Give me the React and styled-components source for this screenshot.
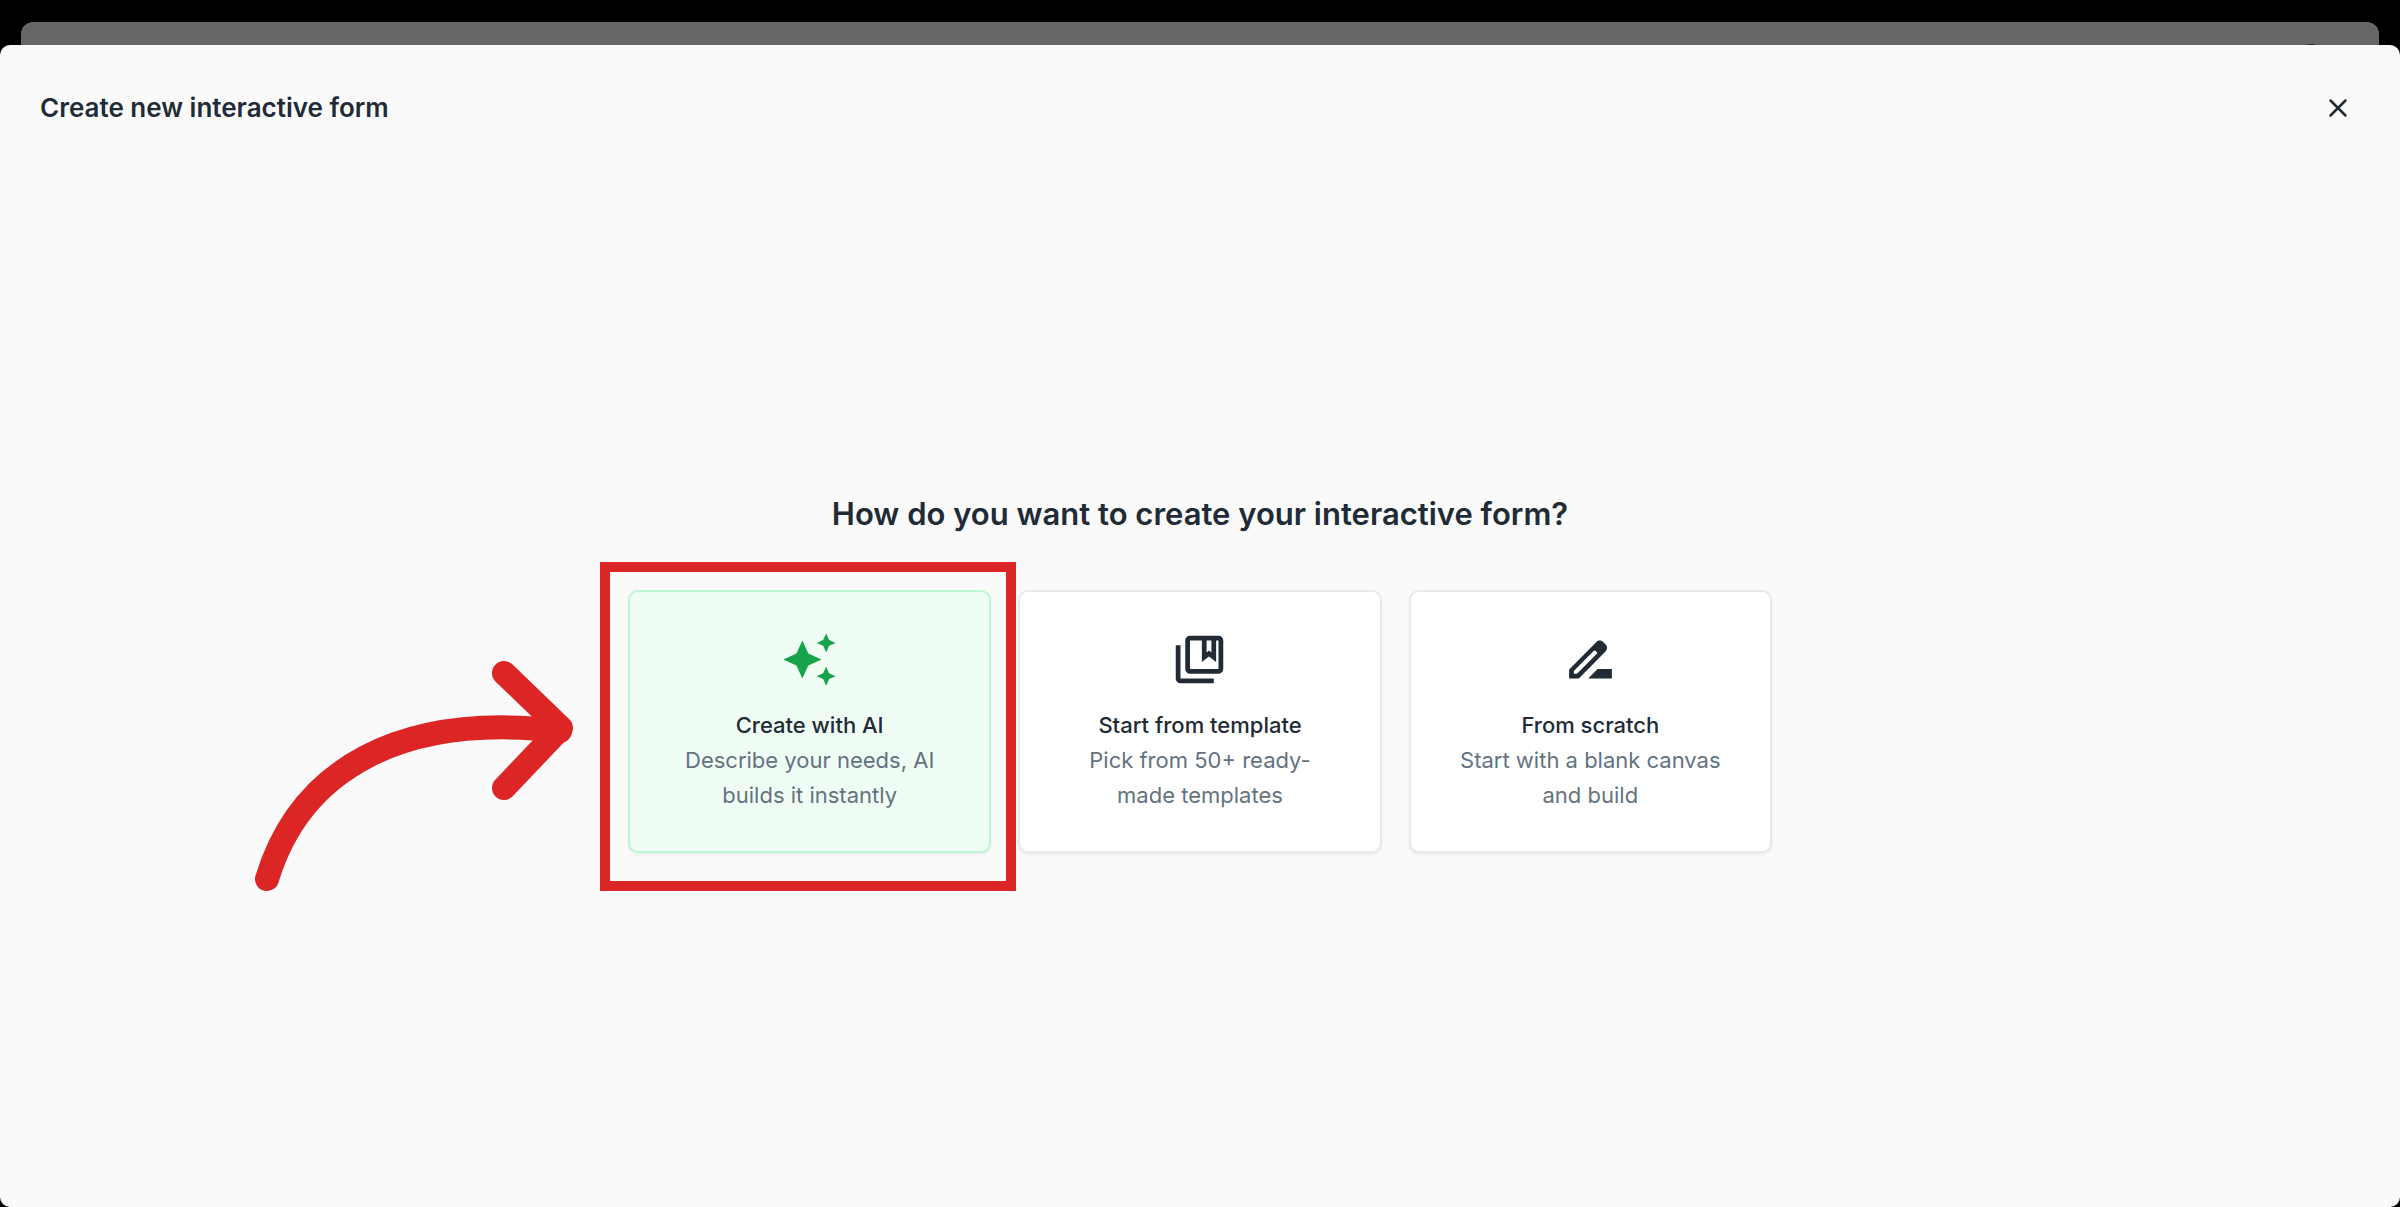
import React from "react";
import styled, { createGlobalStyle } from "styled-components";
import { MdAutoAwesome, MdOutlineCollectionsBookmark } from "react-icons/md";
import { X } from "lucide-react";

const GlobalStyle = createGlobalStyle`
  * {
    box-sizing: border-box;
  }
  body {
    margin: 0;
    background: #000;
    color: #212b36;
    font-family: Inter, "Liberation Sans", sans-serif;
  }
`;

const Page = styled.div`
  display: flex;
  flex-direction: column;
  min-height: 100vh;
`;

const PageBehind = styled.div`
  position: relative;
  height: 23px;
  margin: 22px 21px 0;
  background: #666;
  border-radius: 12px 12px 0 0;
  overflow: hidden;
`;

const AvatarEdge = styled.span`
  position: absolute;
  right: 56px;
  bottom: -23px;
  width: 24px;
  height: 24px;
  border-radius: 50%;
  background: #222;
`;

const Sheet = styled.section`
  display: flex;
  flex: 1;
  flex-direction: column;
  background: #fafafa;
  border-radius: 10px;
`;

const Header = styled.header`
  display: flex;
  align-items: center;
  justify-content: space-between;
  padding: 46px 44px 16px 40px;
`;

const Title = styled.h1`
  margin: 0;
  font-size: 26px;
  font-weight: 600;
  line-height: 34px;
`;

const CloseButton = styled.button`
  display: flex;
  align-items: center;
  justify-content: center;
  width: 36px;
  height: 34px;
  padding: 0;
  border: 0;
  background: none;
  color: inherit;
  cursor: pointer;
`;

const Body = styled.main`
  display: flex;
  flex: 1;
  flex-direction: column;
  align-items: center;
  justify-content: center;
  gap: 57px;
`;

const Question = styled.h2`
  margin: 0;
  font-size: 31px;
  font-weight: 600;
  line-height: 38px;
  text-align: center;
`;

const Options = styled.div`
  display: grid;
  grid-template-columns: repeat(3, 1fr);
  gap: 27px;
  width: 100%;
  max-width: 1144px;
`;

const OptionSlot = styled.div`
  position: relative;
  display: flex;
`;

const OptionCard = styled.button`
  display: flex;
  flex: 1;
  flex-direction: column;
  align-items: center;
  padding: 39px 40px 38px;
  border: 2px solid ${(props) => (props.$featured ? "#bbf7d0" : "#e5eaee")};
  border-radius: 10px;
  background: ${(props) => (props.$featured ? "#f0fdf4" : "#fff")};
  box-shadow: 0 2px 3px rgba(0, 0, 0, 0.06);
  color: #212b36;
  font: inherit;
  font-size: 22px;
  line-height: 35px;
  text-align: center;
  cursor: pointer;

  svg {
    width: 57px;
    height: 57px;
    margin-bottom: 20px;
    color: ${(props) => (props.$featured ? "#16a34a" : "inherit")};
  }
`;

const OptionName = styled.span`
  font-weight: 500;
`;

const OptionText = styled.span`
  max-width: 272px;
  color: #637381;
`;

const Highlight = styled.div`
  position: absolute;
  inset: -28px -25px -38px -28px;
  border: 10px solid #dc2626;
  pointer-events: none;
`;

const ArrowDrawing = styled.svg`
  position: absolute;
  top: 65px;
  right: 100%;
  width: 328px;
  height: 240px;
  margin-right: 50px;
  pointer-events: none;
`;

const PencilIcon = () => (
  <svg viewBox="0 0 24 24" fill="currentColor" aria-hidden="true">
    <path d="M15 16l-4 4h10v-4z" />
    <path
      fillRule="evenodd"
      d="M3 16.2L14.5 4.6c.8-.8 2-.8 2.8 0l1.1 1.1c.8.8.8 2 0 2.8L7.1 20H3zM5 16.8V18h1.3l8.3-8.3c.3-.3.3-.6 0-.9l-.4-.4c-.3-.3-.6-.3-.9 0z"
    />
  </svg>
);

const Arrow = () => (
  <ArrowDrawing viewBox="250 655 328 240" aria-hidden="true">
    <g
      fill="none"
      stroke="#dc2626"
      strokeWidth="24"
      strokeLinecap="round"
      strokeLinejoin="round"
    >
      <path d="M267 879C300 770 400 712 560 731" />
      <path d="M504 673L561 728L504 788" />
    </g>
  </ArrowDrawing>
);

const options = [
  {
    name: "Create with AI",
    text: "Describe your needs, AI builds it instantly",
    icon: <MdAutoAwesome />,
    featured: true,
  },
  {
    name: "Start from template",
    text: "Pick from 50+ ready-made templates",
    icon: <MdOutlineCollectionsBookmark />,
  },
  {
    name: "From scratch",
    text: "Start with a blank canvas and build",
    icon: <PencilIcon />,
  },
];

const App = () => {
  return (
    <Page>
      <GlobalStyle />
      <PageBehind>
        <AvatarEdge />
      </PageBehind>
      <Sheet>
        <Header>
          <Title>Create new interactive form</Title>
          <CloseButton type="button" aria-label="Close">
            <X size={30} strokeWidth={2} />
          </CloseButton>
        </Header>
        <Body>
          <Question>How do you want to create your interactive form?</Question>
          <Options>
            {options.map((option) => (
              <OptionSlot key={option.name}>
                <OptionCard type="button" $featured={option.featured}>
                  {option.icon}
                  <OptionName>{option.name}</OptionName>
                  <OptionText>{option.text}</OptionText>
                </OptionCard>
                {option.featured && (
                  <>
                    <Highlight />
                    <Arrow />
                  </>
                )}
              </OptionSlot>
            ))}
          </Options>
        </Body>
      </Sheet>
    </Page>
  );
};

export default App;
